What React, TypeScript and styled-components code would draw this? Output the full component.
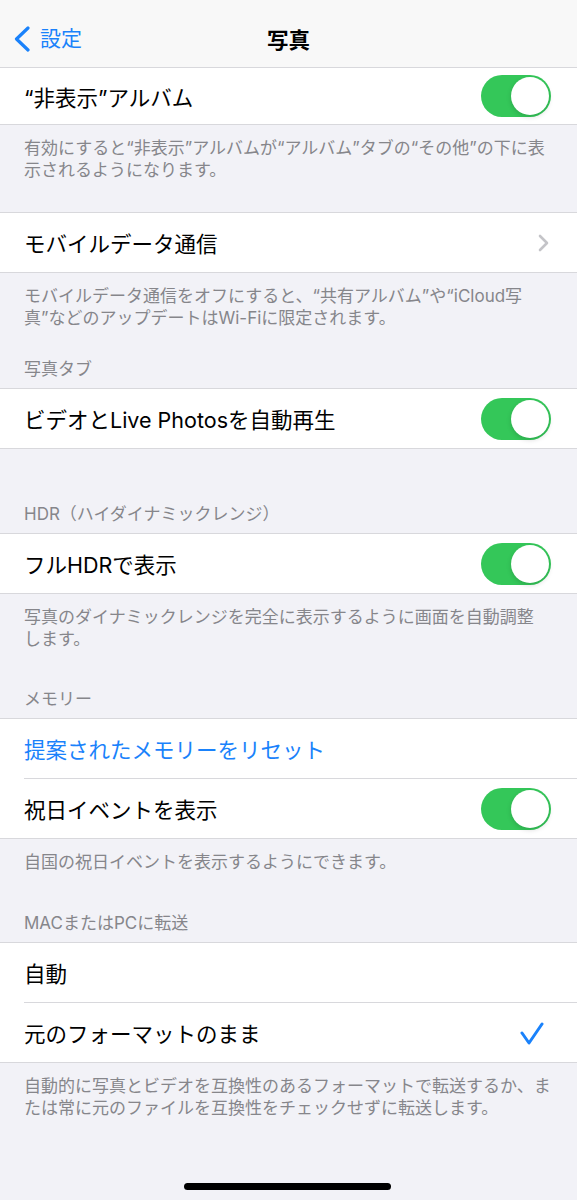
import React from 'react'
import styled, { createGlobalStyle } from 'styled-components'

const GlobalStyle = createGlobalStyle`
  html, body {
    margin: 0;
    padding: 0;
    background: #f2f2f7;
  }
  body {
    font-family: Inter, 'Noto Sans CJK JP', sans-serif;
    -webkit-font-smoothing: antialiased;
  }
`

const BLUE = '#1a82fb'
const GREEN = '#34c759'
const SEP = '#d8d8dc'

const Toggle: React.FC<{ on?: boolean }> = ({ on = true }) => (
  <StyledToggle $on={on}>
    <Knob $on={on} />
  </StyledToggle>
)

const Chevron: React.FC = () => (
  <svg width="14" height="20" viewBox="0 0 14 20">
    <path d="M3 3 L10 10 L3 17" fill="none" stroke="#c4c4c8" strokeWidth="2.6" strokeLinecap="round" strokeLinejoin="round" />
  </svg>
)

const Check: React.FC = () => (
  <CheckIcon width="24" height="24" viewBox="0 0 24 24">
    <path d="M2 12 L9 22 L22 3" fill="none" stroke={BLUE} strokeWidth="3" strokeLinecap="round" strokeLinejoin="round" />
  </CheckIcon>
)

const App: React.FC = () => {
  return (
    <Page>
      <GlobalStyle />
      <NavBar>
        <BackButton>
          <svg width="18" height="26" viewBox="0 0 18 26">
            <path d="M15 2 L3.5 13 L15 24" fill="none" stroke={BLUE} strokeWidth="3.2" strokeLinecap="round" strokeLinejoin="round" />
          </svg>
          <span>設定</span>
        </BackButton>
        <NavTitle>写真</NavTitle>
        <span />
      </NavBar>

      <Section>
        <Group $noTop>
          <Row $height={56}>
            <RowLabel>“非表示”アルバム</RowLabel>
            <Toggle />
          </Row>
        </Group>
        <Footer>
          有効にすると“非表示”アルバムが“アルバム”タブの“その他”の下に表<br />
          示されるようになります。
        </Footer>
      </Section>

      <Section $gap={31}>
        <Group>
          <Row>
            <RowLabel>モバイルデータ通信</RowLabel>
            <Chevron />
          </Row>
        </Group>
        <Footer>
          モバイルデータ通信をオフにすると、“共有アルバム”や“iCloud写<br />
          真”などのアップデートはWi-Fiに限定されます。
        </Footer>
      </Section>

      <Section $gap={29}>
        <SectionHeader>写真タブ</SectionHeader>
        <Group>
          <Row>
            <RowLabel>ビデオとLive Photosを自動再生</RowLabel>
            <Toggle />
          </Row>
        </Group>
      </Section>

      <Section $gap={54}>
        <SectionHeader>HDR（ハイダイナミックレンジ）</SectionHeader>
        <Group>
          <Row>
            <RowLabel>フルHDRで表示</RowLabel>
            <Toggle />
          </Row>
        </Group>
        <Footer>
          写真のダイナミックレンジを完全に表示するように画面を自動調整<br />
          します。
        </Footer>
      </Section>

      <Section $gap={38}>
        <SectionHeader>メモリー</SectionHeader>
        <Group>
          <Row>
            <RowLabel $blue>提案されたメモリーをリセット</RowLabel>
          </Row>
          <Row>
            <RowLabel>祝日イベントを表示</RowLabel>
            <Toggle />
          </Row>
        </Group>
        <Footer>自国の祝日イベントを表示するようにできます。</Footer>
      </Section>

      <Section $gap={39}>
        <SectionHeader>MACまたはPCに転送</SectionHeader>
        <Group>
          <Row>
            <RowLabel>自動</RowLabel>
          </Row>
          <Row>
            <RowLabel>元のフォーマットのまま</RowLabel>
            <Check />
          </Row>
        </Group>
        <Footer>
          自動的に写真とビデオを互換性のあるフォーマットで転送するか、ま<br />
          たは常に元のファイルを互換性をチェックせずに転送します。
        </Footer>
      </Section>

      <HomeIndicator />
    </Page>
  )
}

const Page = styled.div`
  min-height: 1200px;
  background: #f2f2f7;
`

const NavBar = styled.div`
  display: grid;
  grid-template-columns: 1fr auto 1fr;
  align-items: center;
  height: 67px;
  padding: 0 13px;
  background: #f8f8f8;
  border-bottom: 1px solid ${SEP};
  box-sizing: content-box;
`

const BackButton = styled.div`
  display: flex;
  align-items: center;
  gap: 9px;
  color: ${BLUE};
  font-size: 21px;
  margin-top: 10px;
  span {
    line-height: 1;
  }
`

const NavTitle = styled.div`
  font-size: 21.5px;
  font-weight: 700;
  color: #000;
  margin-top: 10px;
`

const Section = styled.div<{ $gap?: number }>`
  margin-top: ${(p) => p.$gap || 0}px;
`

const SectionHeader = styled.div`
  padding: 0 24px 8px;
  font-size: 17px;
  line-height: 22px;
  color: #86868b;
`

const Group = styled.div<{ $noTop?: boolean }>`
  background: #fff;
  padding-left: 24px;
  border-top: ${(p) => (p.$noTop ? 'none' : `1px solid ${SEP}`)};
  border-bottom: 1px solid ${SEP};
`

const Row = styled.div<{ $height?: number }>`
  display: flex;
  align-items: center;
  justify-content: space-between;
  height: ${(p) => p.$height || 59}px;
  padding-right: 26px;
  & + & {
    border-top: 1px solid ${SEP};
  }
`

const RowLabel = styled.div<{ $blue?: boolean }>`
  font-size: 21.5px;
  color: ${(p) => (p.$blue ? BLUE : '#000')};
  white-space: nowrap;
`

const CheckIcon = styled.svg`
  margin-right: 7px;
`

const Footer = styled.div`
  padding: 12px 24px 0;
  font-size: 17px;
  line-height: 22px;
  color: #86868b;
  white-space: nowrap;
`

const StyledToggle = styled.div<{ $on: boolean }>`
  display: flex;
  align-items: center;
  justify-content: ${(p) => (p.$on ? 'flex-end' : 'flex-start')};
  width: 70px;
  height: 42px;
  padding: 2px;
  box-sizing: border-box;
  border-radius: 21px;
  background: ${(p) => (p.$on ? GREEN : '#e9e9eb')};
`

const Knob = styled.div<{ $on: boolean }>`
  width: 38px;
  height: 38px;
  border-radius: 50%;
  background: #fff;
  box-shadow: 0 2px 5px rgba(0, 0, 0, 0.15);
`

const HomeIndicator = styled.div`
  position: fixed;
  left: 184px;
  bottom: 10px;
  width: 207px;
  height: 7px;
  border-radius: 4px;
  background: #000;
`

export default App
